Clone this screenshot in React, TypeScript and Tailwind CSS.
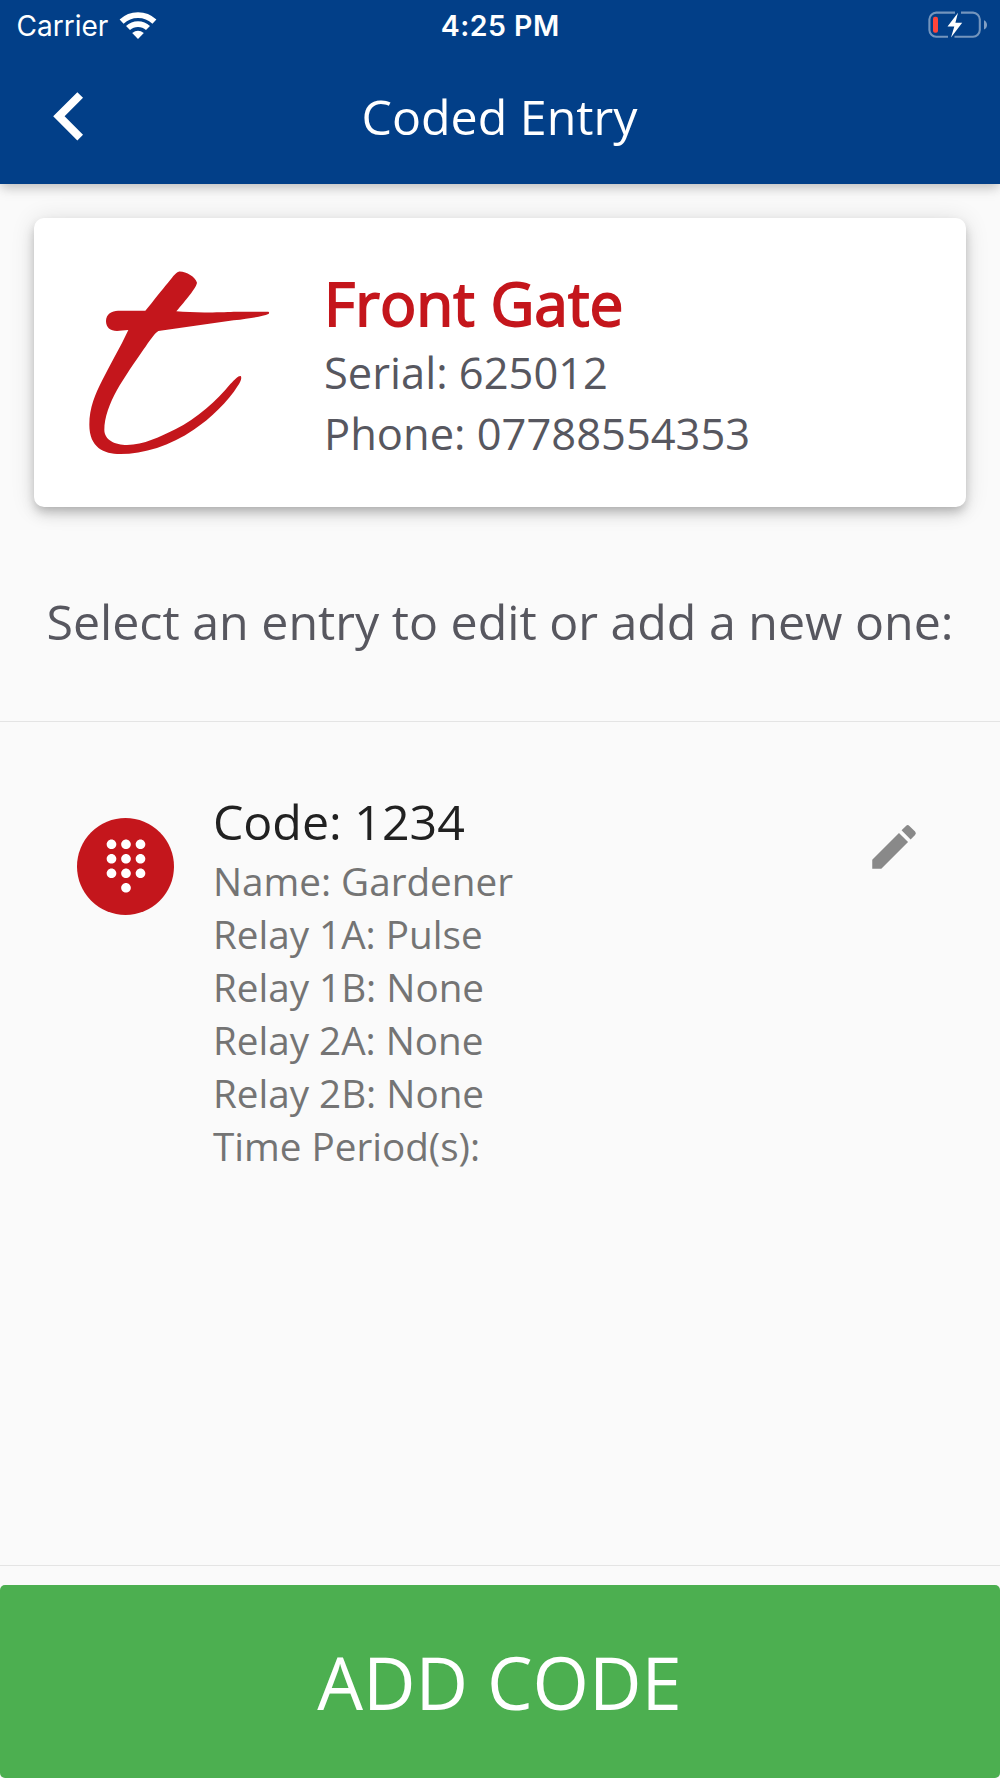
import React from 'react';
import { MdChevronLeft, MdDialpad, MdEdit } from 'react-icons/md';

interface Entry {
    code: string;
    details: string[];
}

const entries: Entry[] = [
    {
        code: '1234',
        details: [
            'Name: Gardener',
            'Relay 1A: Pulse',
            'Relay 1B: None',
            'Relay 2A: None',
            'Relay 2B: None',
            'Time Period(s):'
        ]
    }
];

function WifiIcon() {
    return (
        <svg className="w-[38px] h-7" viewBox="0 0 38 28" fill="none" stroke="#fff" strokeWidth="5.8">
            <path d="M2.6 10.6A23.8 23.8 0 0 1 35.4 10.6" />
            <path d="M9 17A14.6 14.6 0 0 1 29 17" />
            <path d="M13.2 22.1Q19 17.3 24.8 22.1L19 27.9Z" fill="#fff" stroke="none" />
        </svg>
    );
}

function BatteryIcon() {
    return (
        <svg className="w-[60px] h-7" viewBox="0 0 60 28" fill="none">
            <path
                d="M27 1.6H8.2A7 7 0 0 0 1.4 8.4V19A7 7 0 0 0 8.2 25.8H20M26.5 25.8H45A7 7 0 0 0 51.8 19V8.4A7 7 0 0 0 45 1.6H33"
                stroke="#fff"
                strokeOpacity="0.45"
                strokeWidth="2.1"
            />
            <path d="M56 9.2C60 11 60 16.8 56 18.6Z" fill="#fff" fillOpacity="0.5" />
            <rect x="5" y="5.8" width="5" height="16" rx="2" fill="#ff453a" />
            <path d="M30 1.8L19.5 15.4H26.3L23 26.6L34.2 11.8H27.4Z" fill="#fff" />
        </svg>
    );
}

function Logo() {
    return (
        <svg className="w-[186.67px] h-[188.33px] shrink-0" viewBox="200 205 560 565">
            <path
                fill="#c4161c"
                d="M475 213C495 211 525 228 530 246C528 262 495 300 468 332C520 337 600 335 640 333L742 333C747 333 748 338 744 340C728 347 690 353 640 359L414 391C402 398 385 425 370 446C345 482 312 530 290 568C268 608 252 650 252 688C252 718 285 733 320 733C370 733 420 708 465 686C530 653 590 600 630 550C645 535 655 524 661 526C666 532 660 545 652 556C625 600 570 655 520 687C450 735 370 760 300 760C250 760 207 740 207 672C207 620 225 580 245 540C270 490 300 440 324 388C310 388 300 391 290 391C270 391 257 380 257 361C257 340 275 330 293 330L375 330C400 300 425 267 443 246C455 232 465 216 475 213Z"
            />
        </svg>
    );
}

function Header() {
    return (
        <header className="h-[183.5px] bg-[#023f88] text-white shadow-[0_4px_10px_-2px_rgba(0,0,0,0.16),0_6px_12px_rgba(0,0,0,0.1)]">
            <div className="grid grid-cols-[1fr_auto_1fr] items-center h-12 pl-[16.5px] pr-3 font-['Inter',sans-serif] leading-[46px]">
                <div className="flex items-center gap-[10.5px]">
                    <span className="text-[28px] pt-0.5">Carrier</span>
                    <WifiIcon />
                </div>
                <div className="text-center text-[28.5px] font-semibold tracking-[0.5px] mr-1 pt-[3px]">4:25 PM</div>
                <div className="flex justify-end">
                    <BatteryIcon />
                </div>
            </div>
            <div className="grid grid-cols-[1fr_auto_1fr] items-center h-[136px]">
                <MdChevronLeft className="ml-[21px] w-[96.6px] h-[96.6px]" />
                <h1 className="text-[48.3px] pr-px">Coded Entry</h1>
            </div>
        </header>
    );
}

export default function App() {
    return (
        <div className="flex flex-col w-[1000px] h-[1778px] overflow-hidden bg-[#fafafa] font-['Open_Sans',sans-serif]">
            <Header />

            <div className="flex mx-[34px] mt-[34px] h-[289.5px] pl-[52.7px] bg-white rounded-[10px] shadow-[0_5px_10px_-2px_rgba(0,0,0,0.18),0_8px_14px_rgba(0,0,0,0.1),0_2px_24px_rgba(0,0,0,0.12)]">
                <div className="pt-[51px]">
                    <Logo />
                </div>
                <div className="pl-[50.7px] pt-[45.5px] text-[43.48px] leading-[60.6px] text-[#57575f]">
                    <h2 className="text-[60.4px] leading-[79px] pb-px text-[#c4161c] [-webkit-text-stroke:1.8px_#c4161c]">Front Gate</h2>
                    <p>Serial: 625012</p>
                    <p>Phone: 07788554353</p>
                </div>
            </div>

            <p className="mt-[81px] pb-[67px] text-center whitespace-nowrap text-[48.31px] leading-[66px] text-[#57575f] border-b border-[#e4e4e4]">
                Select an entry to edit or add a new one:
            </p>

            <ul className="flex-1 border-b border-[#e4e4e4]">
                {entries.map((entry) => (
                    <li key={entry.code} className="flex items-start px-[77.3px]">
                        <div className="mt-24 flex items-center justify-center w-[96.6px] h-[96.6px] shrink-0 rounded-full bg-[#c4161c] text-white">
                            <MdDialpad className="w-[58px] h-[58px]" />
                        </div>
                        <div className="flex-1 ml-[39px] pt-[67px]">
                            <h3 className="text-[48.31px] leading-[65.6px] text-[#212121]">Code: {entry.code}</h3>
                            <div className="text-[38.65px] leading-[53.13px] text-[#747474]">
                                {entry.details.map((line) => (
                                    <p key={line}>{line}</p>
                                ))}
                            </div>
                        </div>
                        <MdEdit className="mt-24 w-[58px] h-[58px] text-[#898989]" />
                    </li>
                ))}
            </ul>

            <button className="mt-[19px] h-[193px] pt-[2px] pr-px shrink-0 rounded-[5px] bg-[#4caf50] text-white text-[72.46px]">ADD CODE</button>
        </div>
    );
}
